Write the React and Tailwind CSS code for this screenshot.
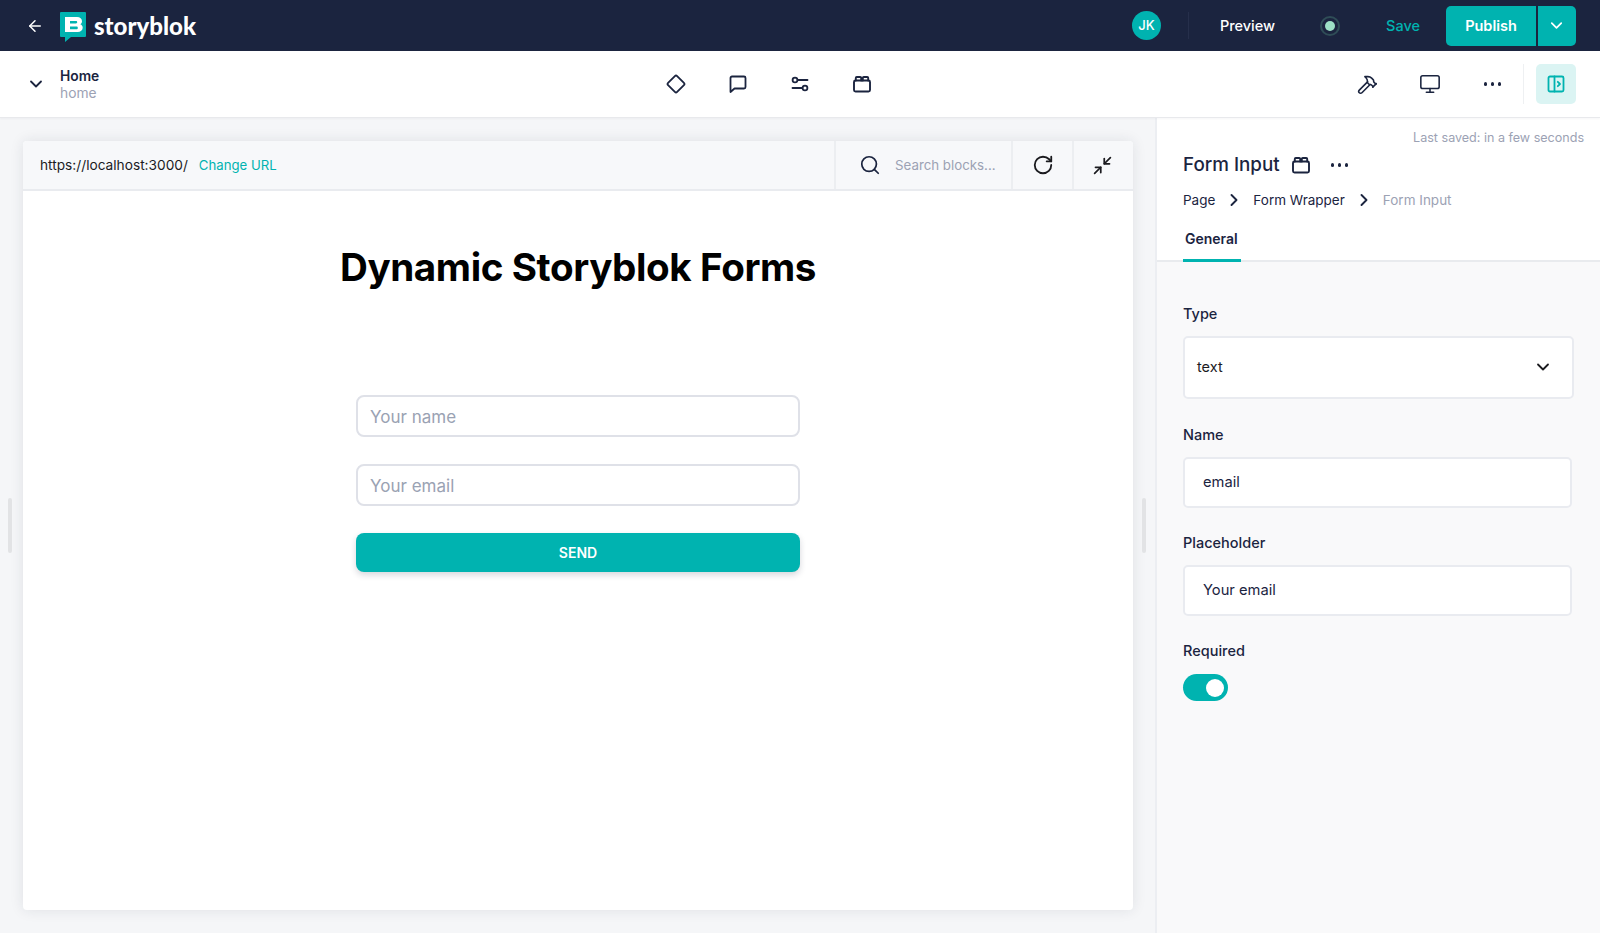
import React from "react";
import { ArrowLeft, ChevronDown, ChevronRight, Hammer, Monitor, Search, RotateCw, Minimize2 } from "lucide-react";

function Lego({ size = 20, color = "#1b243f", stroke = 1.9 }) {
  return (
    <svg width={size} height={size} viewBox="0 0 20 20" fill="none" stroke={color} strokeWidth={stroke} strokeLinejoin="round" strokeLinecap="round">
      <rect x="2" y="6.500" width="16" height="11" rx="1.5" />
      <path d="M3.800 6.500V4a1 1 0 0 1 1-1h3.400a1 1 0 0 1 1 1v2.500" />
      <path d="M10.800 6.500V4a1 1 0 0 1 1-1h3.400a1 1 0 0 1 1 1v2.500" />
    </svg>
  );
}

function Diamond() {
  return (
    <svg width="20" height="20" viewBox="0 0 20 20" fill="none" stroke="#1b243f" strokeWidth="1.8" strokeLinejoin="round">
      <rect x="3.600" y="3.600" width="12.800" height="12.800" rx="1.600" transform="rotate(45 10 10)" />
    </svg>
  );
}

function Bubble() {
  return (
    <svg width="20" height="20" viewBox="0 0 20 20" fill="none" stroke="#1b243f" strokeWidth="1.8" strokeLinejoin="round">
      <path d="M2.500 18V4a1.500 1.500 0 0 1 1.500-1.500h12A1.500 1.500 0 0 1 17.500 4v9a1.500 1.500 0 0 1-1.500 1.500H6.500z" />
    </svg>
  );
}

function Sliders() {
  return (
    <svg width="20" height="20" viewBox="0 0 20 20" fill="none" stroke="#1b243f" strokeWidth="1.8" strokeLinecap="round">
      <circle cx="5" cy="6" r="2.400" />
      <path d="M8 6h9.500" />
      <circle cx="15" cy="14" r="2.400" />
      <path d="M2.500 14h9.500" />
    </svg>
  );
}

function Dots({ size = 3, color = "#1b243f" }) {
  return (
    <span className="flex items-center gap-[3.5px]">
      {[0, 1, 2].map((i) => (
        <span key={i} className="rounded-full" style={{ width: size + 0.5, height: size + 0.5, background: color }} />
      ))}
    </span>
  );
}

function PanelIcon() {
  return (
    <svg width="18" height="18" viewBox="0 0 18 18" fill="none" stroke="#00b3b0" strokeWidth="1.800" strokeLinejoin="round" strokeLinecap="round">
      <rect x="1.500" y="1.500" width="15" height="15" rx="1.500" />
      <path d="M7.500 1.500v15" />
      <path d="M10.800 6.800 13 9l-2.200 2.200" />
    </svg>
  );
}

function Logo() {
  return (
    <svg width="26" height="30" viewBox="0 0 26 30">
      <path d="M1 0h24a1 1 0 0 1 1 1v23a1 1 0 0 1-1 1H11l-6 5v-5H1a1 1 0 0 1-1-1V1a1 1 0 0 1 1-1z" fill="#00b3b0" />
      <path fillRule="evenodd" clipRule="evenodd" d="M5 5h12c3 0 5 1.700 5 4.200 0 1.400-.6 2.500-1.700 3.100 1.500.6 2.400 1.900 2.400 3.500 0 2.700-2.200 4.200-5 4.200H5zM10 9v2.400h6c.8 0 1.200-.5 1.200-1.200S16.800 9 16 9zm0 5.600v2.600h6.500c.8 0 1.300-.5 1.300-1.300s-.5-1.300-1.300-1.300z" fill="#fff" />
    </svg>
  );
}

function Grip({ className }) {
  return <div className={"absolute top-[380px] w-[4px] h-[55px] rounded-full bg-[#e2e3e5] " + className} />;
}

function Field({ label, children, mtClass }) {
  return (
    <div className={mtClass}>
      <div className="text-[14.5px] leading-[20px] font-medium text-[#1b243f]">{label}</div>
      {children}
    </div>
  );
}

function TextBox({ value }) {
  return (
    <div className="mt-[12px] w-[389px] h-[51px] bg-white border-2 border-[#e9ebf0] rounded-[5px] flex items-center pl-[18px] text-[14.7px] text-[#1b243f]">
      {value}
    </div>
  );
}

function FormBox({ text }) {
  return (
    <div className="w-full h-[42px] border-2 border-[#dfe1e8] rounded-[8px] flex items-center pl-[12px] pt-[3px] text-[17px] text-[#9aa2b3]">
      {text}
    </div>
  );
}

export default function App() {
  return (
    <div className="w-[1600px] h-[933px] overflow-hidden flex flex-col bg-white text-[#1b243f] font-['Inter',sans-serif]">
      {/* Header */}
      <header className="h-[51px] shrink-0 bg-[#1b243f] flex items-center pl-[26px] pr-[24px]">
        <ArrowLeft size={18} color="#fff" strokeWidth={2} />
        <div className="ml-[16px] mt-[3px] flex"><Logo /></div>
        <span className="ml-[8px] text-[24px] leading-none font-black text-white font-['Lato',sans-serif]">storyblok</span>

        <div className="ml-auto flex items-center">
          <div className="w-[29px] h-[29px] rounded-full bg-[#00b3b0] flex items-center justify-center text-white text-[13px] font-medium">JK</div>
          <div className="ml-[27px] w-px h-[27px] bg-[#262f4b]" />
          <span className="ml-[31px] text-[14.5px] font-medium text-white">Preview</span>
          <div className="ml-[45px] w-[20px] h-[20px] rounded-full border-[2px] border-[#2f4d57] flex items-center justify-center">
            <div className="w-[10px] h-[10px] rounded-full bg-[#9ce0c5]" />
          </div>
          <span className="ml-[46px] text-[14.5px] font-medium text-[#00b3b0]">Save</span>
          <div className="ml-[26px] flex h-[40px] rounded-[5px] overflow-hidden">
            <div className="w-[90px] bg-[#00b3b0] flex items-center justify-center text-white text-[14.5px] font-semibold">Publish</div>
            <div className="w-[40px] bg-[#00b3b0] border-l-2 border-[#1b243f] flex items-center justify-center pr-[2px]">
              <ChevronDown size={19} color="#fff" strokeWidth={2.2} />
            </div>
          </div>
        </div>
      </header>

      {/* Sub bar */}
      <div className="h-[67px] shrink-0 bg-white border-b border-[#e8e9ec] relative z-10 flex items-center pl-[26px] pr-[24px] shadow-[0_1px_2px_rgba(27,36,63,0.04)]">
        <ChevronDown size={20} strokeWidth={2.2} color="#1b243f" />
        <div className="ml-[14px] pt-[2px] flex flex-col">
          <span className="text-[13.8px] leading-[17px] font-semibold text-[#1b243f]">Home</span>
          <span className="text-[13.8px] leading-[17px] text-[#9ca2b4]">home</span>
        </div>
        <div className="ml-[567px] flex items-center gap-[42px]">
          <Diamond />
          <Bubble />
          <Sliders />
          <Lego />
        </div>
        <div className="ml-auto flex items-center">
          <Hammer size={21} strokeWidth={1.8} color="#1b243f" />
          <div className="ml-[41px]"><Monitor size={22} strokeWidth={1.7} color="#1b243f" /></div>
          <div className="ml-[43px]"><Dots /></div>
          <div className="ml-[22px] w-px h-[40px] bg-[#eef0f2]" />
          <div className="ml-[12px] w-[40px] h-[40px] rounded-[5px] bg-[#dbf4f3] flex items-center justify-center"><PanelIcon /></div>
        </div>
      </div>

      {/* Main */}
      <div className="flex-1 min-h-0 flex">
        <div className="relative w-[1155px] shrink-0 bg-[#f5f6f8] pt-[23px] pb-[23px] pl-[23px] pr-[22px]">
          <Grip className="left-[8px]" />
          <Grip className="left-[1142px]" />
          <div className="h-full bg-white rounded-[4px] shadow-[0_0_14px_rgba(27,36,63,0.10)] flex flex-col overflow-hidden">
            <div className="h-[50px] shrink-0 bg-[#f7f8fa] border-b-2 border-[#e9ebef] flex items-center pl-[17px]">
              <div className="flex items-center">
                <span className="text-[13.7px] text-[#1b1b1f]">https://localhost:3000/</span>
                <span className="ml-[11px] pt-[2px] text-[13.2px] text-[#00b3b0]">Change URL</span>
              </div>
              <div className="ml-auto flex h-full">
                <div className="w-[177px] border-l-2 border-[#eceef1] flex items-center pl-[23px]">
                  <Search size={22} strokeWidth={1.9} color="#1b243f" />
                  <span className="ml-[14px] pt-[2px] text-[13.3px] text-[#9ca2b4]">Search blocks...</span>
                </div>
                <div className="w-[61px] border-l-2 border-[#eceef1] flex items-center justify-center">
                  <RotateCw size={22} strokeWidth={2} color="#1b1b1f" />
                </div>
                <div className="w-[61px] border-l-2 border-[#eceef1] flex items-center justify-center pr-[2px]">
                  <Minimize2 size={21} strokeWidth={2} color="#1b1b1f" />
                </div>
              </div>
            </div>
            <div className="flex-1 flex flex-col items-center">
              <h1 className="mt-[51px] text-[38.6px] leading-[50px] font-bold tracking-[-0.4px] text-black">Dynamic Storyblok Forms</h1>
              <div className="mt-[103px] w-[444px] flex flex-col gap-[27px]">
                <FormBox text="Your name" />
                <FormBox text="Your email" />
                <button className="h-[39px] w-full rounded-[8px] bg-[#00b3b0] text-white text-[14px] font-semibold shadow-[0_3px_6px_rgba(27,36,63,0.18)]">SEND</button>
              </div>
            </div>
          </div>
        </div>

        {/* Right panel */}
        <aside className="flex-1 min-w-0 flex flex-col border-l-2 border-[#eceef2] bg-[#f9f9fa]">
          <div className="h-[144px] shrink-0 bg-white border-b-2 border-[#e9ebee] relative pl-[26px] pt-[10px]">
            <div className="absolute right-[16px] top-[11px] text-[12.55px] leading-[18px] text-[#9ca2b4]">Last saved: in a few seconds</div>
            <div className="mt-[23px] flex items-center h-[28px]">
              <span className="text-[18.8px] leading-none font-medium text-[#1b243f]">Form Input</span>
              <span className="ml-[11px] flex"><Lego size={20} /></span>
              <span className="ml-[20px]"><Dots /></span>
            </div>
            <div className="mt-[11px] flex items-center text-[13.5px] leading-[20px]">
              <span>Page</span>
              <ChevronRight size={20} strokeWidth={2.3} className="ml-[9px]" />
              <span className="ml-[9px]">Form Wrapper</span>
              <ChevronRight size={20} strokeWidth={2.3} className="ml-[9px]" />
              <span className="ml-[9px] text-[#9ca2b4]">Form Input</span>
            </div>
            <div className="absolute left-[26px] bottom-[-2px] w-[58px] h-[3px] bg-[#00b3b0]" />
            <div className="mt-[19px] ml-[2px] text-[14px] leading-[20px] font-semibold text-[#1b243f]">General</div>
          </div>
          <div className="pl-[26px] pt-[42px]">
            <Field label="Type">
              <div className="mt-[12px] w-[391px] h-[63px] bg-white border-2 border-[#e9ebf0] rounded-[5px] flex items-center pl-[12px] pr-[19px] pb-[2px] text-[14.5px] text-[#1b1b1f]">
                text
                <ChevronDown size={20} strokeWidth={2.2} className="ml-auto" color="#1b1b1f" />
              </div>
            </Field>
            <Field label="Name" mtClass="mt-[26px]"><TextBox value="email" /></Field>
            <Field label="Placeholder" mtClass="mt-[25px]"><TextBox value="Your email" /></Field>
            <Field label="Required" mtClass="mt-[25px]">
              <div className="mt-[13px] w-[45px] h-[27px] rounded-full bg-[#00b3b0] flex items-center justify-end pr-[4px]">
                <div className="w-[18px] h-[18px] rounded-full bg-white" />
              </div>
            </Field>
          </div>
        </aside>
      </div>
    </div>
  );
}
